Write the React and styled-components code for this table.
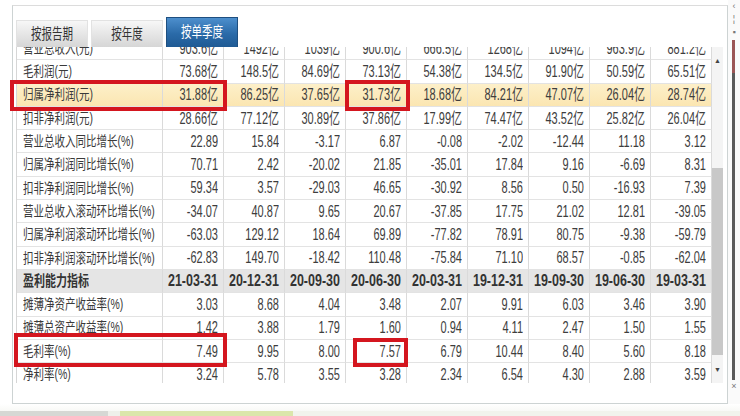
import styled, { createGlobalStyle } from "styled-components";

const GlobalStyle = createGlobalStyle`
  html, body {
    margin: 0;
    padding: 0;
    background: #fff;
  }
  body {
    font-family: "Liberation Sans", "Noto Sans CJK SC", sans-serif;
    color: #333;
  }
`;

const rows = [
  { label: "营业总收入(元)", values: ["903.6亿", "1492亿", "1039亿", "900.6亿", "666.5亿", "1268亿", "1094亿", "963.9亿", "881.2亿"] },
  { label: "毛利润(元)", values: ["73.68亿", "148.5亿", "84.69亿", "73.13亿", "54.38亿", "134.5亿", "91.90亿", "50.59亿", "65.51亿"] },
  { label: "归属净利润(元)", tone: "hl", values: ["31.88亿", "86.25亿", "37.65亿", "31.73亿", "18.68亿", "84.21亿", "47.07亿", "26.04亿", "28.74亿"] },
  { label: "扣非净利润(元)", values: ["28.66亿", "77.12亿", "30.89亿", "37.86亿", "17.99亿", "74.47亿", "43.52亿", "25.82亿", "26.04亿"] },
  { label: "营业总收入同比增长(%)", values: ["22.89", "15.84", "-3.17", "6.87", "-0.08", "-2.02", "-12.44", "11.18", "3.12"] },
  { label: "归属净利润同比增长(%)", values: ["70.71", "2.42", "-20.02", "21.85", "-35.01", "17.84", "9.16", "-6.69", "8.31"] },
  { label: "扣非净利润同比增长(%)", values: ["59.34", "3.57", "-29.03", "46.65", "-30.92", "8.56", "0.50", "-16.93", "7.39"] },
  { label: "营业总收入滚动环比增长(%)", values: ["-34.07", "40.87", "9.65", "20.67", "-37.85", "17.75", "21.02", "12.81", "-39.05"] },
  { label: "归属净利润滚动环比增长(%)", values: ["-63.03", "129.12", "18.64", "69.89", "-77.82", "78.91", "80.75", "-9.38", "-59.79"] },
  { label: "扣非净利润滚动环比增长(%)", values: ["-62.83", "149.70", "-18.42", "110.48", "-75.84", "71.10", "68.57", "-0.85", "-62.04"] },
  { label: "盈利能力指标", tone: "head", values: ["21-03-31", "20-12-31", "20-09-30", "20-06-30", "20-03-31", "19-12-31", "19-09-30", "19-06-30", "19-03-31"] },
  { label: "摊薄净资产收益率(%)", values: ["3.03", "8.68", "4.04", "3.48", "2.07", "9.91", "6.03", "3.46", "3.90"] },
  { label: "摊薄总资产收益率(%)", values: ["1.42", "3.88", "1.79", "1.60", "0.94", "4.11", "2.47", "1.50", "1.55"] },
  { label: "毛利率(%)", values: ["7.49", "9.95", "8.00", "7.57", "6.79", "10.44", "8.40", "5.60", "8.18"] },
  { label: "净利率(%)", values: ["3.24", "5.78", "3.55", "3.28", "2.34", "6.54", "4.30", "2.88", "3.59"] },
];

const marks = [
  { x: 10, y: 80, w: 217, h: 31 },
  { x: 345, y: 80, w: 65, h: 31 },
  { x: 14, y: 333, w: 213, h: 34 },
  { x: 353, y: 338, w: 55, h: 29 },
];

const App = () => {
  return (
    <>
      <GlobalStyle />
      <Page>
        <Panel>
          <Tabs>
            <Tab><TabText>按报告期</TabText></Tab>
            <Tab><TabText>按年度</TabText></Tab>
            <Tab $active><TabText>按单季度</TabText></Tab>
          </Tabs>
          <Body>
            <Clip>
              <Table>
                {rows.map((r) => (
                  <Row key={r.label} $tone={r.tone}>
                    <LabelCell>
                      {r.tone === "head" ? <HeadLabel>{r.label}</HeadLabel> : <LabelText>{r.label}</LabelText>}
                    </LabelCell>
                    {r.values.map((v, i) => (
                      <NumCell key={i}>
                        {r.tone === "head" ? <HeadNum>{v}</HeadNum> : <NumText>{v}</NumText>}
                      </NumCell>
                    ))}
                  </Row>
                ))}
              </Table>
            </Clip>
            <VScroll>
              <Arrow>▲</Arrow>
              <Track>
                <Thumb />
              </Track>
              <Arrow>▼</Arrow>
            </VScroll>
          </Body>
        </Panel>
        <OuterBar>
          <Glyph>‹</Glyph>
          <Glyph>¦</Glyph>
          <Glyph>▪</Glyph>
          <BarLine />
          <Glyph>×</Glyph>
        </OuterBar>
        <BottomStrip>
          <Seg $w={108} $c="#d6d8d4" />
          <Seg $w={12} $c="#eef0ea" />
          <Seg $w={173} $c="#dbe6ab" />
          <Seg $w={447} $c="#f1f3ec" />
        </BottomStrip>
        {marks.map((m, i) => (
          <Mark key={i} $x={m.x} $y={m.y} $w={m.w} $h={m.h} />
        ))}
      </Page>
    </>
  );
};

const Page = styled.div`
  position: relative;
  width: 740px;
  height: 416px;
  overflow: hidden;
  background: #fff;
  display: grid;
  grid-template-columns: 12px 716px 12px;
  grid-template-rows: 5px 399px 12px;
`;

const Panel = styled.div`
  grid-column: 2;
  grid-row: 2;
  box-sizing: border-box;
  border: 1px solid #cdd3d3;
  border-top-color: #dcdcdc;
  padding: 13px 4px 0 3px;
  background: #fff;
`;

const Tabs = styled.div`
  display: flex;
  align-items: flex-end;
  gap: 3px;
  height: 28px;
`;

const Tab = styled.div`
  width: 72px;
  height: ${(p) => (p.$active ? 30 : 27)}px;
  box-sizing: border-box;
  display: flex;
  align-items: center;
  justify-content: center;
  color: ${(p) => (p.$active ? "#fff" : "#333")};
  background: ${(p) =>
    p.$active
      ? "linear-gradient(#4d8fcd, #2a6aa8 55%, #1f5a94)"
      : "linear-gradient(#f7f7f7, #e6e6e6 50%, #d6d6d6)"};
  border: 1px solid ${(p) => (p.$active ? "#1e4f80" : "#e2e2e2")};
  border-bottom: none;
`;

const TabText = styled.span`
  display: inline-block;
  font-size: 10.5px;
  line-height: 1;
  transform: scaleY(1.4);
`;

const Body = styled.div`
  display: flex;
  height: 336px;
`;

const Clip = styled.div`
  width: 696px;
  overflow: hidden;
  border-left: 1px solid #d6d6d6;
  box-sizing: border-box;
`;

const Table = styled.div`
  margin-top: -10px;
`;

const Row = styled.div`
  display: grid;
  grid-template-columns: 146px repeat(9, 61px);
  height: 23.3px;
  background: ${(p) =>
    p.$tone === "hl" ? "linear-gradient(#fdf0c9, #fbe5b0)" : p.$tone === "head" ? "#e5e5e5" : "#fff"};
`;

const Cell = styled.div`
  display: flex;
  align-items: center;
  box-sizing: border-box;
  border-right: 1px solid #dadada;
  border-bottom: 1px solid #e3e3e3;
  white-space: nowrap;
`;

const LabelCell = styled(Cell)`
  justify-content: flex-start;
  padding-left: 6px;
`;

const NumCell = styled(Cell)`
  justify-content: flex-end;
  padding-right: 5px;
`;

const LabelText = styled.span`
  display: inline-block;
  font-size: 10.5px;
  line-height: 1;
  color: #3a3a3a;
  transform: scaleY(1.35);
`;

const HeadLabel = styled(LabelText)`
  font-size: 11px;
  font-weight: bold;
  color: #333;
  transform: scaleY(1.3);
`;

const NumText = styled.span`
  display: inline-block;
  font-size: 11px;
  line-height: 1;
  color: #3d3d3d;
  transform: scaleY(1.45);
  transform-origin: right center;
`;

const HeadNum = styled(NumText)`
  font-size: 12.5px;
  font-weight: bold;
  color: #333;
  transform: scaleY(1.3);
`;

const VScroll = styled.div`
  width: 11px;
  display: flex;
  flex-direction: column;
  background: #f4f4f4;
`;

const Arrow = styled.div`
  height: 26px;
  display: flex;
  align-items: center;
  justify-content: center;
  font-size: 7px;
  color: #444;
  &:last-child {
    height: 28px;
  }
`;

const Track = styled.div`
  flex: 1;
  display: flex;
  flex-direction: column;
  padding-top: 95px;
`;

const Thumb = styled.div`
  flex: 1;
  background: #c8c8c8;
`;

const OuterBar = styled.div`
  grid-column: 3;
  grid-row: 1 / span 2;
  display: flex;
  flex-direction: column;
  align-items: flex-start;
  padding-left: 3px;
  background: #fafafa;
`;

const Glyph = styled.div`
  height: 13px;
  width: 6px;
  font-size: 9px;
  line-height: 13px;
  color: #777;
  text-align: center;
`;

const BarLine = styled.div`
  width: 3px;
  height: 340px;
  margin: 1px 0 0 1px;
  background: linear-gradient(#9b5555 0 33px, #5a5a5a 33px);
`;

const BottomStrip = styled.div`
  grid-column: 1 / span 3;
  grid-row: 3;
  display: flex;
  align-items: flex-end;
  background: linear-gradient(#ffffff, #f3f4ef);
`;

const Seg = styled.div`
  width: ${(p) => p.$w}px;
  height: 5px;
  background: ${(p) => p.$c};
`;

const Mark = styled.div`
  position: absolute;
  left: ${(p) => p.$x}px;
  top: ${(p) => p.$y}px;
  width: ${(p) => p.$w}px;
  height: ${(p) => p.$h}px;
  box-sizing: border-box;
  border: 4px solid #d4161f;
  pointer-events: none;
`;

export default App;
